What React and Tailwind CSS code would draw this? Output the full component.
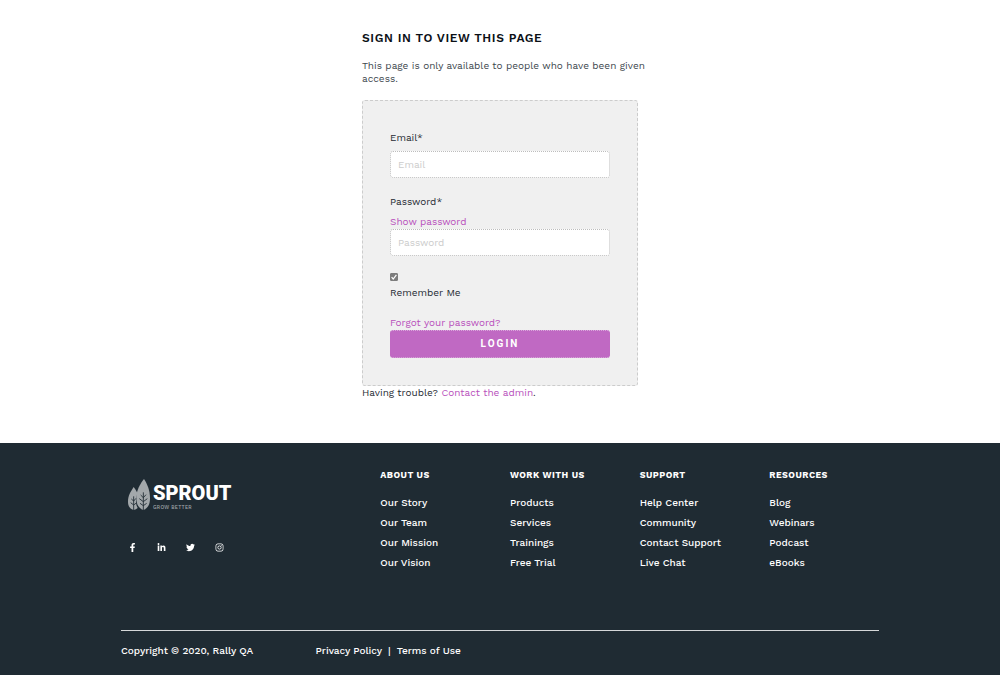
import { FaFacebookF, FaLinkedinIn, FaTwitter, FaInstagram } from "react-icons/fa";

const columns = [
  { title: "ABOUT US", links: ["Our Story", "Our Team", "Our Mission", "Our Vision"] },
  { title: "WORK WITH US", links: ["Products", "Services", "Trainings", "Free Trial"] },
  { title: "SUPPORT", links: ["Help Center", "Community", "Contact Support", "Live Chat"] },
  { title: "RESOURCES", links: ["Blog", "Webinars", "Podcast", "eBooks"] },
];

const socials = [
  { label: "Facebook", Icon: FaFacebookF },
  { label: "LinkedIn", Icon: FaLinkedinIn },
  { label: "Twitter", Icon: FaTwitter },
  { label: "Instagram", Icon: FaInstagram },
];

const fieldClass =
  "block h-[27px] w-full rounded-[3px] border border-dotted border-[#bdbdbd] bg-white px-[7px] pb-px text-[10px] text-[#1f2b33] placeholder:text-[#cccccc] outline-none focus:border-[#c069c3]";

function Leaves() {
  return (
    <svg viewBox="0 0 66 96" className="h-8 w-[22px]" aria-hidden="true">
      <path d="M17 24C8 38 0 50 0 68c0 14 7 22 17 25 5-1 9-3 12-6-6-11-7-25-2-40 1-3 1-5 0-7-3-6-6-11-10-16Z" fill="#a3a8ab" />
      <path d="M48 0C37 14 25 32 25 58c0 18 7 30 21 35 14-5 20-17 20-35C66 32 57 14 48 0Z" fill="#a3a8ab" />
      <g fill="none" stroke="#1f2b33" strokeWidth="2.6">
        <path d="M17 93V52M17 66l-7-6M17 66l7-8M17 78l-9-7M17 78l8-6" />
        <path d="M46 93V40M46 56l-8-8M46 56l8-9M46 68l-12-9M46 68l12-9M46 80l-10-7M46 80l10-7" />
      </g>
    </svg>
  );
}

function SignIn() {
  return (
    <main className="mx-auto w-full max-w-[276px] pt-[30px] pb-11 text-[10px] leading-[13px]">
      <h1 className="text-xs leading-4 font-semibold tracking-wider text-[#0b1016]">SIGN IN TO VIEW THIS PAGE</h1>
      <p className="-mr-3 mt-[13px] text-[#3d474e]">This page is only available to people who have been given access.</p>
      <form
        className="mt-[15px] rounded-[3px] border border-dashed border-[#cccccc] bg-[#f0f0f0] p-[27px]"
        onSubmit={(e) => e.preventDefault()}
      >
        <label htmlFor="email" className="block leading-5">Email*</label>
        <input id="email" type="email" placeholder="Email" className={`${fieldClass} mt-[3px]`} />
        <label htmlFor="password" className="mt-3.5 block leading-5">Password*</label>
        <button type="button" className="mt-[3px] block pb-px text-[#b84fbc]">Show password</button>
        <input id="password" type="password" placeholder="Password" className={fieldClass} />
        <div className="mt-[17px] grid w-2">
          <input
            id="remember"
            type="checkbox"
            defaultChecked
            className="peer col-start-1 row-start-1 size-2 appearance-none rounded-[1px] border border-[#7d7d7d] bg-white checked:bg-[#7d7d7d]"
          />
          <svg viewBox="0 0 8 8" className="pointer-events-none col-start-1 row-start-1 hidden size-2 peer-checked:block" aria-hidden="true">
            <path d="M1.6 4.2 3.2 6 6.4 1.8" fill="none" stroke="#fff" strokeWidth="1.2" />
          </svg>
        </div>
        <label htmlFor="remember" className="mt-[5px] block">Remember Me</label>
        <a href="#forgot" className="mt-[17px] block pb-px text-[#b84fbc]">Forgot your password?</a>
        <button
          type="submit"
          className="block h-7 w-full rounded-[3px] border border-x-0 border-dotted border-[#d9a9db] bg-[#c069c3] pb-px font-[Roboto] text-[10px] font-bold tracking-[2px] text-white"
        >
          LOGIN
        </button>
      </form>
      <p>
        Having trouble? <a href="#admin" className="text-[#b84fbc]">Contact the admin</a>.
      </p>
    </main>
  );
}

function Footer() {
  return (
    <footer className="grow bg-[#1f2b33] px-[121px] pt-[25px] pb-[18px] text-[10px] font-medium text-white">
      <div className="grid grid-cols-6 gap-x-5">
        <div className="col-span-2 pt-[11px] pl-[7px]">
          <a href="#home" className="flex items-center gap-[3px]" aria-label="Sprout, grow better">
            <Leaves />
            <span className="flex flex-col pt-0.5">
              <span className="font-[Roboto] text-[20px] leading-[22px] font-black">SPROUT</span>
              <span className="text-[5px] leading-[6px] tracking-wider text-[#a3a8ab]">GROW BETTER</span>
            </span>
          </a>
          <div className="mt-8 flex gap-5">
            {socials.map(({ label, Icon }) => (
              <a key={label} href={`#${label}`} aria-label={label}>
                <Icon className="size-[9px]" />
              </a>
            ))}
          </div>
        </div>
        {columns.map((c) => (
          <nav key={c.title} aria-label={c.title}>
            <h2 className="text-[9px] leading-[14px] font-bold tracking-wider">{c.title}</h2>
            <ul className="mt-[11px]">
              {c.links.map((l) => (
                <li key={l} className="leading-5">
                  <a href="#link">{l}</a>
                </li>
              ))}
            </ul>
          </nav>
        ))}
      </div>
      <div className="mt-[57px] grid grid-cols-12 gap-x-5 border-t border-[#d5d8d9] pt-2.5 leading-5">
        <p className="col-span-3">Copyright © 2020, Rally QA</p>
        <p className="col-span-9 flex gap-1.5">
          <a href="#privacy">Privacy Policy</a>
          <span>|</span>
          <a href="#terms">Terms of Use</a>
        </p>
      </div>
    </footer>
  );
}

export default function App() {
  return (
    <div className="flex min-h-screen flex-col bg-white font-['Work_Sans','Inter',sans-serif] text-[#1f2b33]">
      <SignIn />
      <Footer />
    </div>
  );
}
